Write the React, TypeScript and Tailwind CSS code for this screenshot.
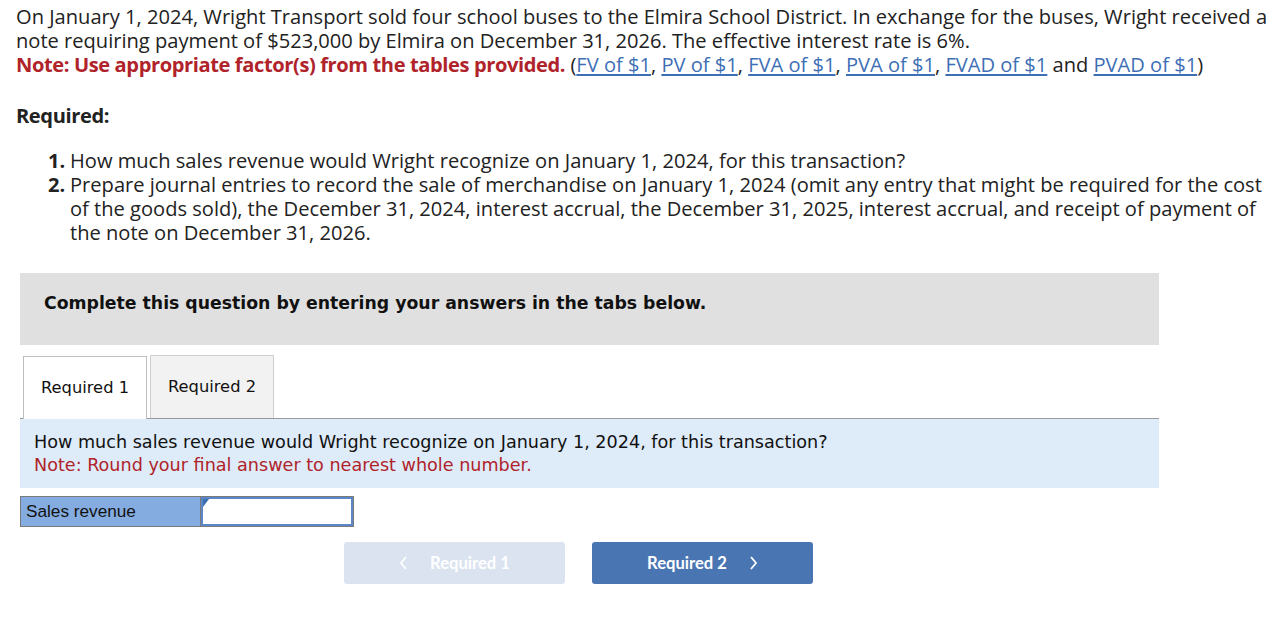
import React from "react";

const proxima = { fontFamily: "'Open Sans', Lato, sans-serif" };

function Link({ children }: { children: React.ReactNode }) {
  return <span className="text-[#3e6fb5] underline underline-offset-2">{children}</span>;
}

export default function App() {
  return (
    <div className="w-[1280px] h-[619px] bg-white overflow-hidden text-[#222]">
      <div className="pl-[16px] pr-[8px] pt-[5px] text-[20.1px] leading-[24px]" style={proxima}>
        <p>
          On January 1, 2024, Wright Transport sold four school buses to the Elmira School District. In exchange for the buses, Wright received a note requiring payment of $523,000 by Elmira on December 31, 2026. The effective interest rate is 6%.
        </p>
        <p>
          <span className="font-bold text-[#b0232a] tracking-[-0.4px]">Note: Use appropriate factor(s) from the tables provided.</span>{" "}
          (<Link>FV of $1</Link>, <Link>PV of $1</Link>, <Link>FVA of $1</Link>, <Link>PVA of $1</Link>, <Link>FVAD of $1</Link> and <Link>PVAD of $1</Link>)
        </p>
        <p className="font-bold mt-[27px] tracking-[-0.4px]">Required:</p>
        <ol className="mt-[21px] pl-[32px]">
          <li className="flex">
            <span className="w-[22px] font-bold">1.</span>
            <span className="flex-1">How much sales revenue would Wright recognize on January 1, 2024, for this transaction?</span>
          </li>
          <li className="flex">
            <span className="w-[22px] font-bold">2.</span>
            <span className="flex-1">
              Prepare journal entries to record the sale of merchandise on January 1, 2024 (omit any entry that might be required for the cost of the goods sold), the December 31, 2024, interest accrual, the December 31, 2025, interest accrual, and receipt of payment of the note on December 31, 2026.
            </span>
          </li>
        </ol>
      </div>

      <div className="ml-[20px] w-[1139px] mt-[28px]" style={{ fontFamily: "'DejaVu Sans', Verdana, sans-serif" }}>
        <div className="bg-[#e0e0e0] h-[72px] flex items-start pt-[18px] pl-[24px]">
          <span className="font-bold text-[17.3px] text-[#111]">Complete this question by entering your answers in the tabs below.</span>
        </div>
        <div className="mt-[10px] flex gap-[3px] pl-[3px] border-b border-[#9a9a9a] h-[64px] items-end">
          <div className="w-[124px] h-[63px] bg-white border border-[#bdbdbd] border-b-0 flex items-center justify-center text-[16.3px] text-[#111] relative top-[1px]">Required 1</div>
          <div className="w-[124px] h-[63px] bg-[#f2f2f2] border border-[#cfcfcf] border-b-0 flex items-center justify-center text-[16.3px] text-[#111]">Required 2</div>
        </div>
        <div className="bg-[#deebf8] h-[69px] pl-[14px] pt-[12px] text-[17.6px] leading-[23px]">
          <div className="text-[#111]">How much sales revenue would Wright recognize on January 1, 2024, for this transaction?</div>
          <div className="text-[#b0232a]">Note: Round your final answer to nearest whole number.</div>
        </div>
        <div className="mt-[8px] flex h-[31px] w-[334px] border border-[#7a7a7a]">
          <div className="w-[180px] bg-[#85ace0] flex items-center pl-[5px] text-[17.2px] text-[#111] border-r border-[#7a7a7a]" style={{ fontFamily: "'Liberation Sans', Arial, sans-serif" }}>
            Sales revenue
          </div>
          <div className="flex-1 bg-[#5b86c7] p-[2px]">
            <div className="w-full h-full bg-white relative">
              <div className="absolute left-0 top-0 w-0 h-0 border-t-[8px] border-t-[#3e6fb5] border-r-[6px] border-r-transparent" />
            </div>
          </div>
        </div>
      </div>

      <div className="mt-[15px] flex gap-[27px] pl-[344px]" style={{ fontFamily: "Lato, 'Open Sans', sans-serif" }}>
        <div className="w-[221px] h-[42px] bg-[#dae3ef] rounded-[3px] flex items-center justify-center gap-[22px] text-white font-bold text-[16.6px]">
          <svg width="9" height="14" viewBox="0 0 9 14"><path d="M7 1L2 7l5 6" fill="none" stroke="white" strokeWidth="1.8" /></svg>
          <span>Required 1</span>
        </div>
        <div className="w-[221px] h-[42px] bg-[#4a75b3] rounded-[3px] flex items-center justify-center gap-[22px] text-white font-bold text-[16.6px]">
          <span>Required 2</span>
          <svg width="9" height="14" viewBox="0 0 9 14"><path d="M2 1l5 6-5 6" fill="none" stroke="white" strokeWidth="1.8" /></svg>
        </div>
      </div>
    </div>
  );
}
